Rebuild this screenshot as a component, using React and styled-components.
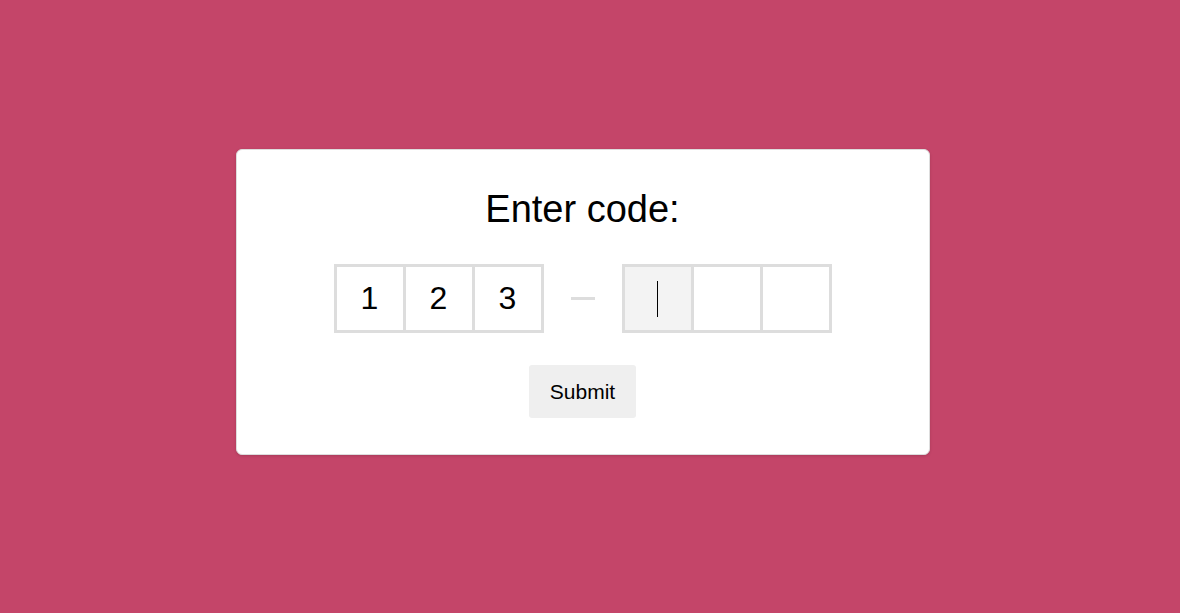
import React from "react";
import styled, { createGlobalStyle } from "styled-components";

const GlobalStyle = createGlobalStyle`
  html, body {
    margin: 0;
    padding: 0;
    background: #c44569;
    font-family: "Liberation Sans", Arial, sans-serif;
  }
`;

const Page = styled.div`
  min-height: 100vh;
  box-sizing: border-box;
  display: flex;
  align-items: center;
  justify-content: center;
  padding: 0 15px 9px 0;
`;

const Card = styled.div`
  width: 694px;
  box-sizing: border-box;
  background: #fff;
  border: 1px solid #ddd;
  border-radius: 6px;
  box-shadow: 0 1px 3px rgba(0, 0, 0, 0.15);
  padding: 38px 0 36px;
  display: flex;
  flex-direction: column;
  align-items: center;
`;

const Title = styled.h1`
  margin: 0;
  font-size: 38px;
  font-weight: normal;
  line-height: 42px;
  color: #000;
`;

const CodeRow = styled.div`
  margin-top: 34px;
  display: flex;
  align-items: center;
`;

const Group = styled.div`
  display: flex;
`;

const Cell = styled.div`
  width: 72px;
  height: 69px;
  box-sizing: border-box;
  border: 3px solid #ddd;
  background: ${(props) => (props.active ? "#f3f3f3" : "#fff")};
  display: flex;
  align-items: center;
  justify-content: center;
  font-size: 32px;
  color: #000;
  & + & {
    margin-left: -3px;
  }
`;

const Caret = styled.span`
  width: 1px;
  height: 36px;
  background: #000;
`;

const Dash = styled.span`
  width: 24px;
  height: 3px;
  margin: 0 27px;
  background: #ddd;
`;

const SubmitButton = styled.button`
  margin-top: 32px;
  height: 53px;
  padding: 0 21px;
  border: none;
  border-radius: 3px;
  background: #efefef;
  font-family: "Liberation Sans", Arial, sans-serif;
  font-size: 21px;
  color: #000;
  cursor: pointer;
`;

function App() {
  const first = ["1", "2", "3"];
  const second = ["", "", ""];
  return (
    <>
      <GlobalStyle />
      <Page>
        <Card>
          <Title>Enter code:</Title>
          <CodeRow>
            <Group>
              {first.map((d, i) => (
                <Cell key={i}>{d}</Cell>
              ))}
            </Group>
            <Dash />
            <Group>
              {second.map((d, i) => (
                <Cell key={i} active={i === 0}>
                  {i === 0 ? <Caret /> : d}
                </Cell>
              ))}
            </Group>
          </CodeRow>
          <SubmitButton>Submit</SubmitButton>
        </Card>
      </Page>
    </>
  );
}

export default App;
